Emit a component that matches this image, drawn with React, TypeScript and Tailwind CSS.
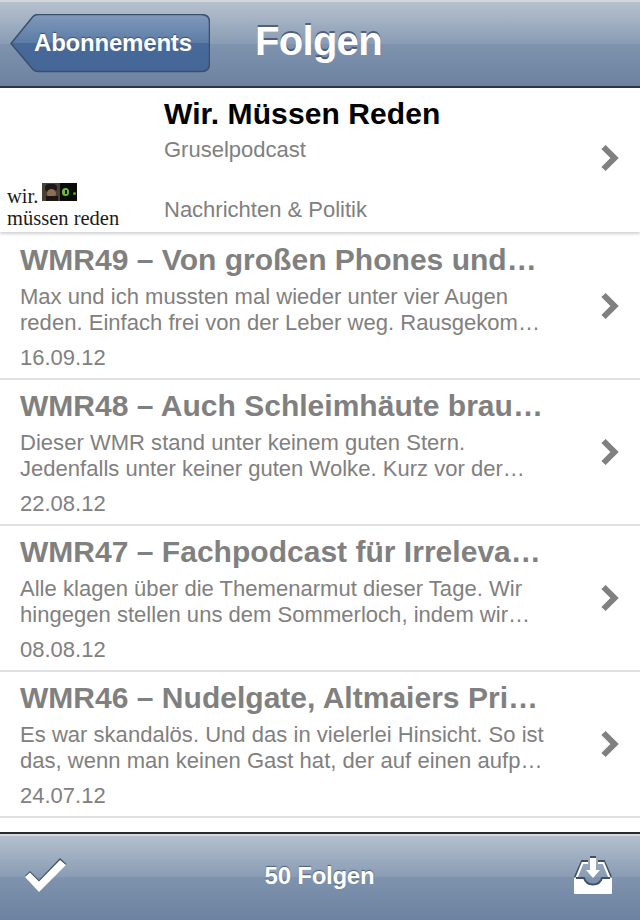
const sans = "font-['Liberation_Sans',Arial,sans-serif]";

const episodes = [
  { t: "WMR49 – Von großen Phones und…", a: "Max und ich mussten mal wieder unter vier Augen", b: "reden. Einfach frei von der Leber weg. Rausgekom…", d: "16.09.12" },
  { t: "WMR48 – Auch Schleimhäute brau…", a: "Dieser WMR stand unter keinem guten Stern.", b: "Jedenfalls unter keiner guten Wolke. Kurz vor der…", d: "22.08.12" },
  { t: "WMR47 – Fachpodcast für Irreleva…", a: "Alle klagen über die Themenarmut dieser Tage. Wir", b: "hingegen stellen uns dem Sommerloch, indem wir…", d: "08.08.12" },
  { t: "WMR46 – Nudelgate, Altmaiers Pri…", a: "Es war skandalös. Und das in vielerlei Hinsicht. So ist", b: "das, wenn man keinen Gast hat, der auf einen aufp…", d: "24.07.12" },
];

const barBg = "bg-[linear-gradient(180deg,#b6c1ce_0%,#899cb4_50%,#7f93ae_50%,#6c82a0_100%)]";

function Chevron() {
  return (
    <svg width="20" height="28" viewBox="0 0 20 28" className="shrink-0">
      <path d="M3.5 3 L14.5 14 L3.5 25" fill="none" stroke="#808080" strokeWidth="6" strokeLinejoin="miter" />
    </svg>
  );
}

function Row({ t, a, b, d }: { t: string; a: string; b: string; d: string }) {
  return (
    <div className="flex h-[146px] items-center justify-between overflow-hidden border-b-2 border-[#e0e0e0] pl-5 pr-[20px] text-[#808080]">
      <div className="flex min-w-0 flex-col self-start whitespace-nowrap pt-[7px]">
        <div className="text-[30px] leading-[38px] font-bold tracking-[0.02px]">{t}</div>
        <div className="mt-[5px] text-[22px] leading-[26px] tracking-[0.03px]">{a}</div>
        <div className="text-[22px] leading-[26px] tracking-[0.03px]">{b}</div>
        <div className="mt-[9px] text-[22px] leading-[26px]">{d}</div>
      </div>
      <Chevron />
    </div>
  );
}

function Logo() {
  return (
    <div className="flex flex-col whitespace-nowrap pb-[2px] pl-[7px] font-['Liberation_Serif',serif] text-[20.5px] leading-[23px] text-[#1a1a1a]">
      <div className="flex items-start">
        <span className="mt-[2px]">wir.</span>
        <div className="ml-[4px] flex h-[18px] w-[35px] overflow-hidden">
          <div className="relative h-full w-[18px] bg-[#4a4036]">
            <div className="absolute left-[3px] top-[1px] h-[8px] w-[12px] rounded-full bg-[#1d1714]" />
            <div className="absolute left-[5px] top-[6px] h-[9px] w-[9px] rounded-full bg-[#8d6e58]" />
            <div className="absolute left-[4px] top-[13px] h-[5px] w-[12px] bg-[#1d1714]" />
          </div>
          <div className="relative h-full w-[17px] bg-[#0a0c07]">
            <div className="absolute left-[2px] top-[5px] h-[8px] w-[7px] rounded-full bg-[#6fba2c]" />
            <div className="absolute left-[5px] top-[7px] h-[4px] w-[2px] bg-[#0a0c07]" />
            <div className="absolute left-[13px] top-[9px] h-[3px] w-[3px] rounded-full bg-[#5c9a28]" />
          </div>
        </div>
      </div>
      <div className="-mt-[1px]">müssen reden</div>
    </div>
  );
}

export default function App() {
  return (
    <div className={`${sans} flex h-[920px] w-[640px] flex-col overflow-hidden bg-white`}>
      <header className={`flex h-[88px] shrink-0 items-center border-b-2 border-t-2 border-b-[#2d3540] border-t-[#d4d8dd] pl-[10px] ${barBg}`}>
        <div className="relative flex h-[60px] w-[200px] shrink-0 items-center pl-[24px]">
          <svg width="200" height="60" viewBox="0 0 200 60" className="absolute inset-0">
            <defs>
              <linearGradient id="btn" x1="0" y1="0" x2="0" y2="1">
                <stop offset="0" stopColor="#8099bb" />
                <stop offset="0.5" stopColor="#5c7ca6" />
                <stop offset="0.5" stopColor="#48699a" />
                <stop offset="1" stopColor="#446797" />
              </linearGradient>
            </defs>
            <path d="M1 29.5 L23 2.5 Q25 0.5 28 0.5 L191 0.5 Q199.5 0.5 199.5 8 L199.5 50 Q199.5 57.5 191 57.5 L28 57.5 Q25 57.5 23 55.5 Z" fill="url(#btn)" stroke="#3b4f6d" strokeWidth="1.5" />
          </svg>
          <span className="relative -mt-[3px] whitespace-nowrap text-[24px] leading-[30px] font-bold tracking-[-0.2px] text-white [text-shadow:0_-1px_1px_rgba(30,50,80,0.6)]">Abonnements</span>
        </div>
        <h1 className="-mt-[6px] ml-[45px] whitespace-nowrap text-[40px] leading-[46px] font-bold tracking-[-0.7px] text-white [text-shadow:0_-2px_0_rgba(50,65,90,0.7)]">Folgen</h1>
      </header>

      <main className="min-h-0 flex-1 overflow-hidden">
        <section className="flex h-[144px] items-stretch justify-between bg-white pr-[20px] shadow-[0_2px_3px_rgba(0,0,0,0.18)]">
          <div className="flex w-[164px] shrink-0 flex-col justify-end">
            <Logo />
          </div>
          <div className="flex min-w-0 flex-1 flex-col whitespace-nowrap pt-[8px] text-[#808080]">
            <div className="text-[30px] leading-[36px] font-bold tracking-[0.1px] text-black">Wir. Müssen Reden</div>
            <div className="mt-[4px] text-[22px] leading-[28px]">Gruselpodcast</div>
            <div className="mt-[32px] text-[22px] leading-[28px]">Nachrichten &amp; Politik</div>
          </div>
          <div className="-mt-[4px] flex items-center">
            <Chevron />
          </div>
        </section>
        <div className="pt-[2px]">
          {episodes.map((e) => (
            <Row key={e.d} {...e} />
          ))}
        </div>
      </main>

      <footer className={`flex h-[88px] shrink-0 items-center justify-between border-t-2 border-[#2a2a2c] pl-[24px] pr-[26px] shadow-[inset_0_2px_0_#d4d8dd] ${barBg}`}>
        <svg width="44" height="38" viewBox="0 0 44 38" className="-mt-[3px] shrink-0">
          <path d="M1 19 L6 14 L15 23 L36 1 L42.5 7 L15 34 Z" fill="#3f5068" />
          <path d="M1 20 L6 15.5 L15 24.5 L36 3 L42 8 L15 35 Z" fill="#fff" />
        </svg>
        <span className="-mt-[2px] ml-[-3px] whitespace-nowrap text-[24px] leading-[30px] font-bold tracking-[-0.25px] text-white [text-shadow:0_-1px_1px_rgba(30,50,80,0.6)]">50 Folgen</span>
        <svg width="40" height="40" viewBox="0 0 40 40" className="-mt-[2px] shrink-0">
          <path d="M1 22 L8 6 L14 6 M24 6 L30 6 L37 22" fill="none" stroke="#3f5068" strokeWidth="2" transform="translate(0,-1)" />
          <path d="M2 23 L8.5 7 L14 7 M24 7 L29.5 7 L36 23" fill="none" stroke="#fff" strokeWidth="2" />
          <rect x="16" y="0" width="6" height="3" fill="#3f5068" />
          <path d="M16 2 H22 V14 H26 L19 22 L12 14 H16 Z" fill="#fff" />
          <path d="M0 22 H10 Q12 29 19 29 Q26 29 28 22 H38 V37 Q38 38 37 38 H1 Q0 38 0 37 Z" fill="#fff" />
          <path d="M2 22 H10 Q12 28.5 19 28.5 Q26 28.5 28 22 H36" fill="none" stroke="#3f5068" strokeWidth="2" />
        </svg>
      </footer>
    </div>
  );
}
